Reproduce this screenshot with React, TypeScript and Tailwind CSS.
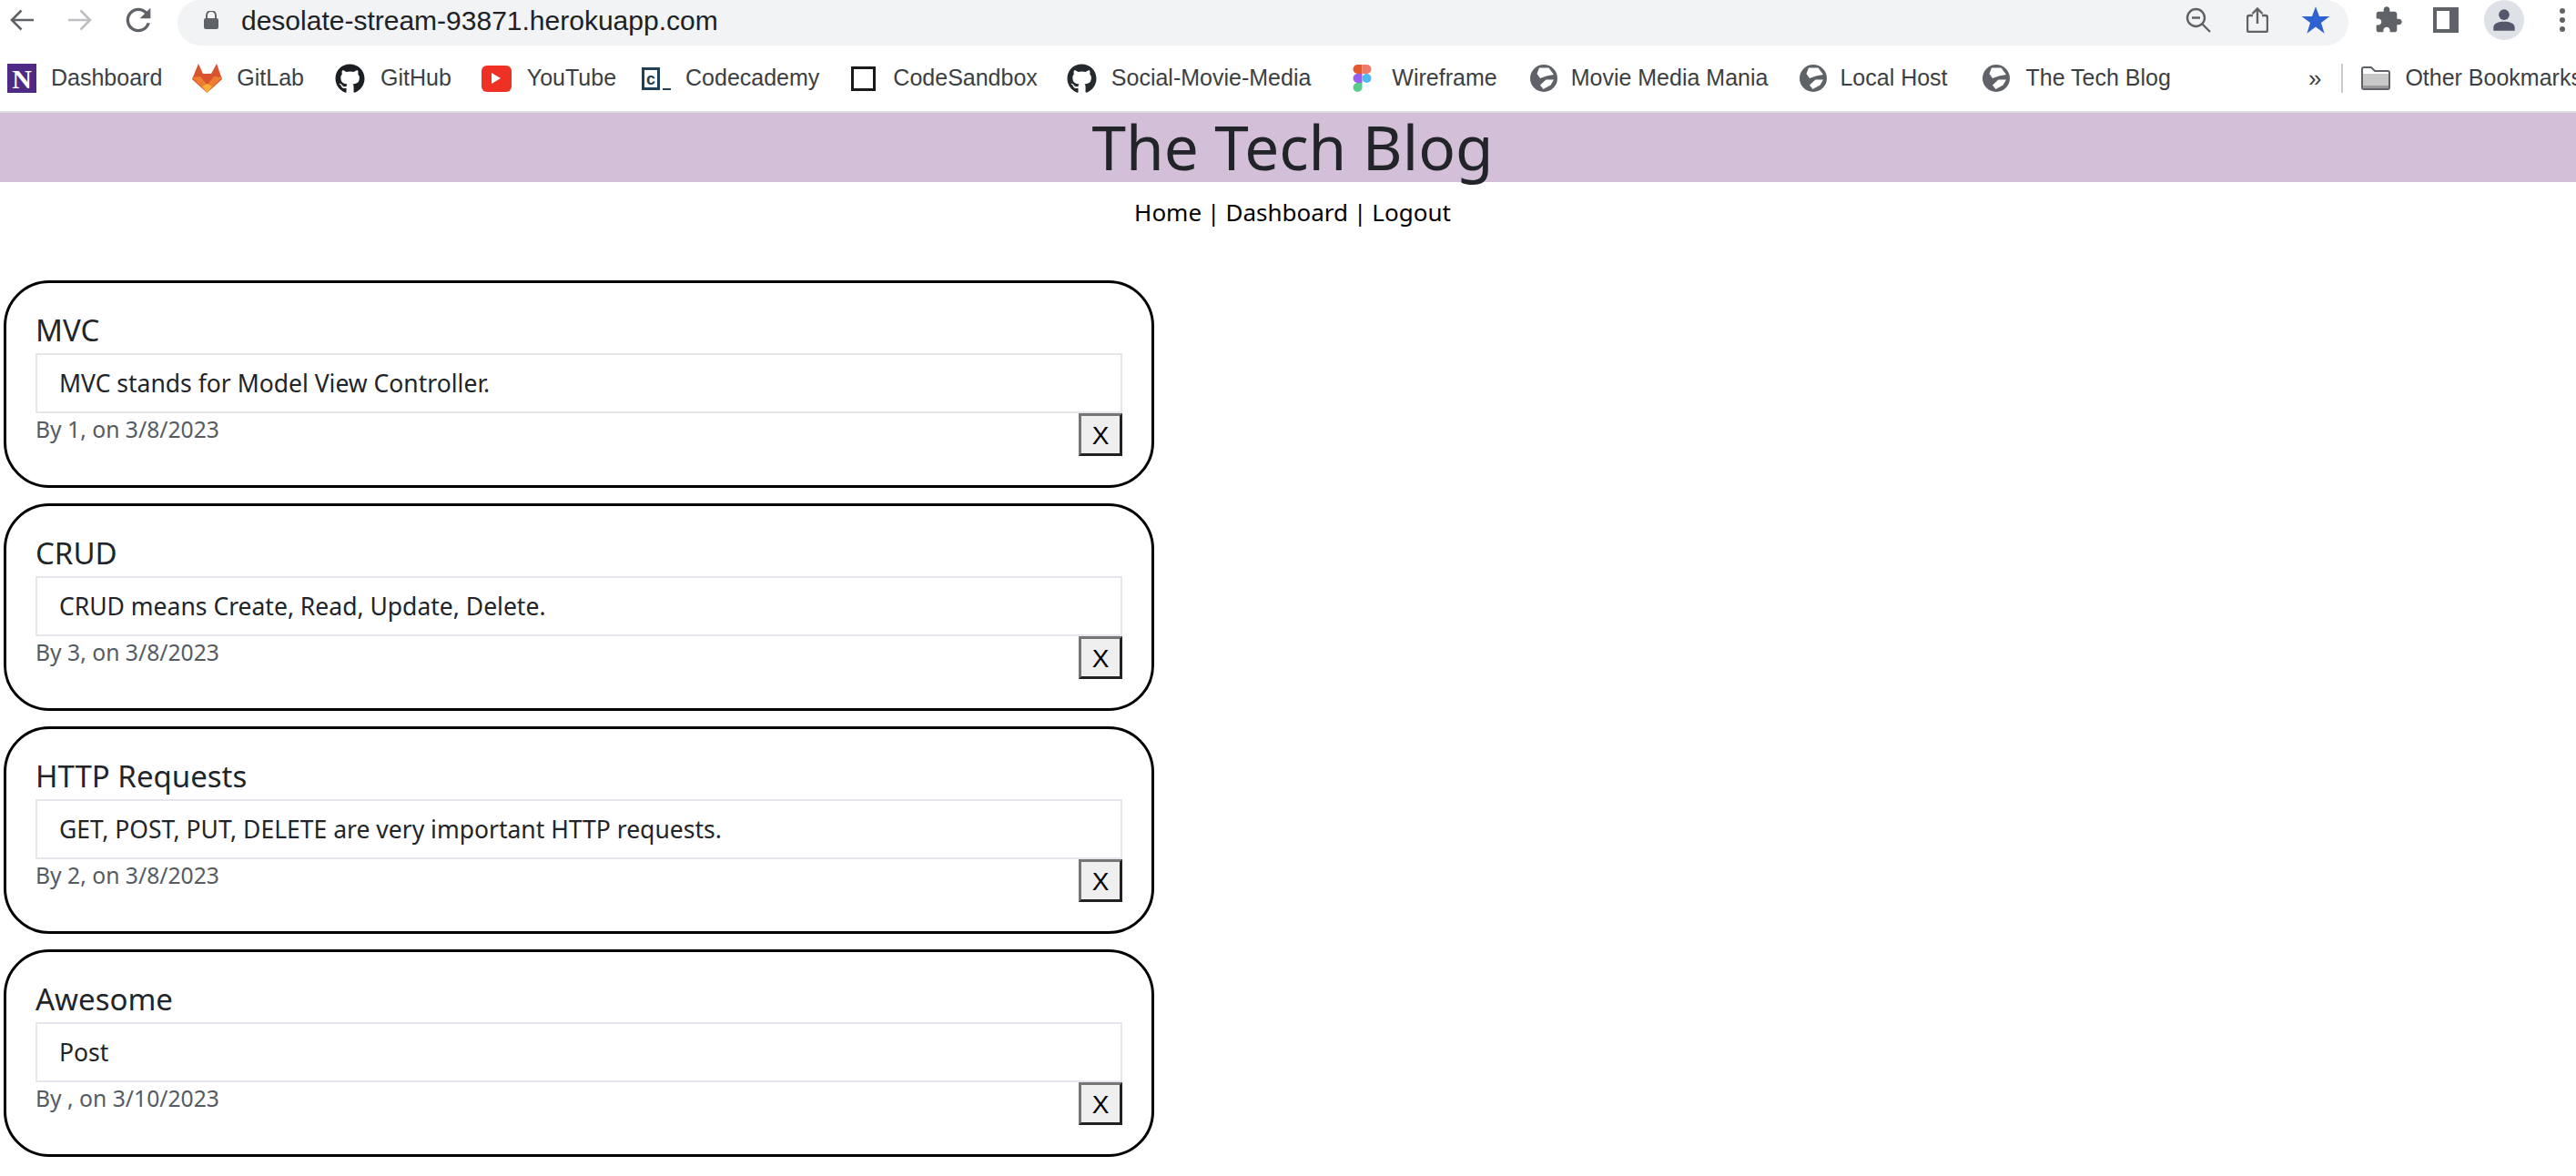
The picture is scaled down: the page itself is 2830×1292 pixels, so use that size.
import { FaGithub } from "react-icons/fa";

const posts = [
  { title: "MVC", body: "MVC stands for Model View Controller.", meta: "By 1, on 3/8/2023" },
  { title: "CRUD", body: "CRUD means Create, Read, Update, Delete.", meta: "By 3, on 3/8/2023" },
  { title: "HTTP Requests", body: "GET, POST, PUT, DELETE are very important HTTP requests.", meta: "By 2, on 3/8/2023" },
  { title: "Awesome", body: "Post", meta: "By , on 3/10/2023" },
];

function Globe() {
  return (
    <svg viewBox="0 0 30 30" className="size-[30px]">
      <circle cx="15" cy="15" r="15" fill="#5f6368" />
      <path d="M10 3.500l10.500 0 5.500 7.500-8 1.500-7 2.500-3.500-5z" fill="#fff" />
      <path d="M11 22.500l6.500-6 8.500 0-3.500 6-8 4.500z" fill="#fff" />
    </svg>
  );
}

function GitLabIcon() {
  return (
    <svg viewBox="0 0 33 32" className="h-[32px] w-[33px]">
      <path d="M16.500 32L0 17 7 0l5 11h9l6-11 6 17z" fill="#d9532f" />
      <path d="M0 15l9-1 8 10v8z" fill="#ee7d32" />
      <path d="M33 15l-9-1-8 10v8z" fill="#ee7d32" />
      <path d="M11 25l5.500-3 5.500 3-5.500 7z" fill="#fbb03b" />
    </svg>
  );
}

function YouTubeIcon() {
  return (
    <div className="flex h-[29px] w-[33px] items-center justify-center rounded-[6px] bg-[#ee3124]">
      <svg viewBox="0 0 10 12" className="h-[12px] w-[10px]">
        <path d="M0 0l10 6-10 6z" fill="#fff" />
      </svg>
    </div>
  );
}

function CodecademyIcon() {
  return (
    <div className="flex h-[32px] w-[32px] items-start pt-[4px]">
      <div className="flex h-[25px] w-[20px] items-center justify-center border-[3px] border-[#204056] font-['Liberation_Sans',sans-serif] text-[18px] leading-none font-bold text-[#204056]">
        c
      </div>
      <div className="mt-[23px] ml-[3px] h-[2px] w-[9px] bg-[#204056]" />
    </div>
  );
}

function FigmaIcon() {
  return (
    <svg viewBox="0 0 20 30" className="h-[30px] w-[21px]">
      <path d="M10 0H5a5 5 0 000 10h5z" fill="#e5582e" />
      <path d="M10 0h5a5 5 0 010 10h-5z" fill="#f0796a" />
      <path d="M10 10H5a5 5 0 000 10h5z" fill="#9a5cf5" />
      <circle cx="15" cy="15" r="5" fill="#4fb9f5" />
      <path d="M5 20h5v5a5 5 0 11-5-5z" fill="#58cc8a" />
    </svg>
  );
}

function FolderIcon() {
  return (
    <svg viewBox="0 0 32 26" className="h-[26px] w-[32px]">
      <path d="M1 3a2 2 0 012-2h8l4 4h14a2 2 0 012 2v16a2 2 0 01-2 2H3a2 2 0 01-2-2z" fill="#fff" stroke="#5f6368" strokeWidth="2" />
      <path d="M2 8h28v13H2z" fill="#c8c8c8" />
      <path d="M2 21h28v3H2z" fill="#9a9a9a" />
    </svg>
  );
}

function Bookmark({ icon, label, ml, gap }: { icon: React.ReactNode; label: string; ml: string; gap: string }) {
  return (
    <div className={`flex shrink-0 items-center ${ml}`}>
      {icon}
      <span className={`whitespace-nowrap text-[25px] text-[#3c4043] ${gap}`}>{label}</span>
    </div>
  );
}

export default function App() {
  return (
    <div className="min-h-[1292px] overflow-hidden bg-white font-['Noto_Sans',sans-serif]">
      <div className="h-[124px] border-b-2 border-[#dadce0] font-['Liberation_Sans',sans-serif]">
        <div className="flex h-[50px] items-center pb-[6px]">
          <svg viewBox="0 0 26 24" className="ml-[11px] h-[24px] w-[26px] shrink-0" fill="none" stroke="#5f6368" strokeWidth="2.600">
            <path d="M26 12H2M12.500 1.500L2 12l10.500 10.500" />
          </svg>
          <svg viewBox="0 0 26 24" className="ml-[38px] h-[24px] w-[26px] shrink-0" fill="none" stroke="#bdbfc2" strokeWidth="2.600">
            <path d="M0 12h24M13.500 1.500L24 12 13.500 22.500" />
          </svg>
          <svg viewBox="0 0 24 24" className="ml-[31px] size-[40px] shrink-0" fill="#5f6368">
            <path d="M17.650 6.350A7.958 7.958 0 0012 4c-4.420 0-7.990 3.580-7.990 8s3.570 8 7.990 8c3.730 0 6.840-2.550 7.730-6h-2.080A5.990 5.990 0 0112 18c-3.310 0-6-2.690-6-6s2.690-6 6-6c1.660 0 3.140.69 4.220 1.780L13 11h7V4l-2.350 2.350z" />
          </svg>
          <div className="ml-[23px] flex h-[50px] w-[2385px] shrink-0 items-center self-start rounded-[28px] bg-[#f1f3f4] pb-[6px]">
            <svg viewBox="0 0 16 20" className="ml-[29px] h-[20px] w-[16px]">
              <path d="M3 8V5a5 5 0 0110 0v3" fill="none" stroke="#5f6368" strokeWidth="2" />
              <rect x="0" y="8" width="16" height="12" rx="2" fill="#5f6368" />
            </svg>
            <span className="ml-[25px] text-[30px] text-[#202124]">desolate-stream-93871.herokuapp.com</span>
            <svg viewBox="0 0 28 28" className="ml-auto size-[28px]" fill="none" stroke="#5f6368" strokeWidth="2.400">
              <circle cx="11.500" cy="11.500" r="9.500" />
              <path d="M7 11.500h9M18.500 18.500L27 27" />
            </svg>
            <svg viewBox="0 0 24 28" className="ml-[39px] h-[28px] w-[24px]" fill="none" stroke="#5f6368" strokeWidth="2.400">
              <path d="M7 9H3a2 2 0 00-2 2v14a2 2 0 002 2h18a2 2 0 002-2V11a2 2 0 00-2-2h-4M12 18V2M6.500 7L12 1.500 17.500 7" />
            </svg>
            <svg viewBox="0 0 24 24" className="ml-[36px] mr-[20px] size-[32px]">
              <path d="M12 1l3 8h8.500l-7 5.200 2.700 8.800L12 17.600 4.800 23l2.700-8.800-7-5.200H9z" fill="#2f62d1" />
            </svg>
          </div>
          <svg viewBox="0 0 24 24" className="ml-[28px] size-[32px]">
            <path d="M20.500 11H19V7c0-1.100-.9-2-2-2h-4V3.500C13 2.120 11.880 1 10.500 1S8 2.120 8 3.500V5H4c-1.100 0-1.990.9-1.990 2v3.800H3.500c1.490 0 2.700 1.210 2.700 2.700s-1.210 2.700-2.700 2.700H2V20c0 1.100.9 2 2 2h3.800v-1.500c0-1.490 1.210-2.700 2.700-2.700 1.490 0 2.700 1.210 2.700 2.700V22H17c1.100 0 2-.9 2-2v-4h1.500c1.380 0 2.500-1.120 2.500-2.500S21.880 11 20.500 11z" fill="#5f6368" />
          </svg>
          <div className="ml-[33px] h-[28px] w-[28px] shrink-0 border-[4px] border-r-[10px] border-[#5f6368] bg-white" />
          <div className="ml-[28px] flex h-[44px] w-[44px] shrink-0 items-center justify-center rounded-full bg-[#dee1e6]">
            <svg viewBox="0 0 24 24" className="size-[28px]">
              <circle cx="12" cy="7" r="5" fill="#55586a" />
              <path d="M2 22v-3c0-4 5-5.500 10-5.500s10 1.500 10 5.500v3z" fill="#55586a" />
            </svg>
          </div>
          <div className="ml-[39px] flex shrink-0 flex-col gap-[4px]">
            <div className="size-[6px] rounded-full bg-[#5f6368]" />
            <div className="size-[6px] rounded-full bg-[#5f6368]" />
            <div className="size-[6px] rounded-full bg-[#5f6368]" />
          </div>
        </div>
        <div className="flex h-[72px] items-center">
          <Bookmark
            ml="ml-[8px]"
            gap="ml-[16px]"
            label="Dashboard"
            icon={
              <div className="flex h-[32px] w-[32px] items-center justify-center bg-[#4e2a84] font-['Liberation_Serif',serif] text-[30px] font-bold text-white">
                N
              </div>
            }
          />
          <Bookmark ml="ml-[33px]" gap="ml-[16px]" label="GitLab" icon={<GitLabIcon />} />
          <Bookmark ml="ml-[34px]" gap="ml-[17px]" label="GitHub" icon={<FaGithub className="size-[33px] text-[#1b1f23]" />} />
          <Bookmark ml="ml-[33px]" gap="ml-[17px]" label="YouTube" icon={<YouTubeIcon />} />
          <Bookmark ml="ml-[28px]" gap="ml-[16px]" label="Codecademy" icon={<CodecademyIcon />} />
          <Bookmark ml="ml-[35px]" gap="ml-[19px]" label="CodeSandbox" icon={<div className="size-[27px] border-[3px] border-[#1a1a1a]" />} />
          <Bookmark ml="ml-[32px]" gap="ml-[16px]" label="Social-Movie-Media" icon={<FaGithub className="size-[33px] text-[#24292e]" />} />
          <Bookmark ml="ml-[46px]" gap="ml-[22px]" label="Wireframe" icon={<FigmaIcon />} />
          <Bookmark ml="ml-[36px]" gap="ml-[15px]" label="Movie Media Mania" icon={<Globe />} />
          <Bookmark ml="ml-[35px]" gap="ml-[14px]" label="Local Host" icon={<Globe />} />
          <Bookmark ml="ml-[38px]" gap="ml-[18px]" label="The Tech Blog" icon={<Globe />} />
          <span className="ml-[151px] shrink-0 text-[26px] text-[#3c4043]">»</span>
          <div className="ml-[22px] h-[32px] w-[2px] shrink-0 bg-[#c8cacd]" />
          <Bookmark ml="ml-[20px]" gap="ml-[16px]" label="Other Bookmarks" icon={<FolderIcon />} />
        </div>
      </div>

      <header className="flex h-[76px] items-center justify-center bg-[#d3bfd7] pl-[10px]">
        <h1 className="text-[67.500px] leading-none text-[#212529]">The Tech Blog</h1>
      </header>
      <nav className="mb-[40px] flex h-[68px] items-center justify-center pb-[2px] pl-[10px] text-[26px] text-black">
        <a>Home</a>
        <span className="mx-[6px]">|</span>
        <a>Dashboard</a>
        <span className="mx-[6px]">|</span>
        <a>Logout</a>
      </nav>

      <div className="ml-[4px] flex w-[1264px] flex-col gap-[17px]">
        {posts.map((post) => (
          <div key={post.title} className="h-[228px] rounded-[50px] border-[3px] border-black px-[32px] pt-[33px]">
            <h2 className="h-[44px] text-[33px] leading-[38px] text-[#212529]">{post.title}</h2>
            <div className="flex h-[66px] items-center border-2 border-[#e6e6ec] pt-[2px] pl-[24px] text-[26.500px] text-[#212529]">{post.body}</div>
            <div className="flex items-start justify-between">
              <span className="text-[24.700px] leading-[35px] text-[#555b62]">{post.meta}</span>
              <button className="h-[47px] w-[48px] border-[3px] border-t-[#767676] border-r-[#222] border-b-[#222] border-l-[#767676] bg-[#efefef] pt-[1px] font-['Liberation_Sans',sans-serif] text-[28px] text-black">
                X
              </button>
            </div>
          </div>
        ))}
      </div>
    </div>
  );
}
